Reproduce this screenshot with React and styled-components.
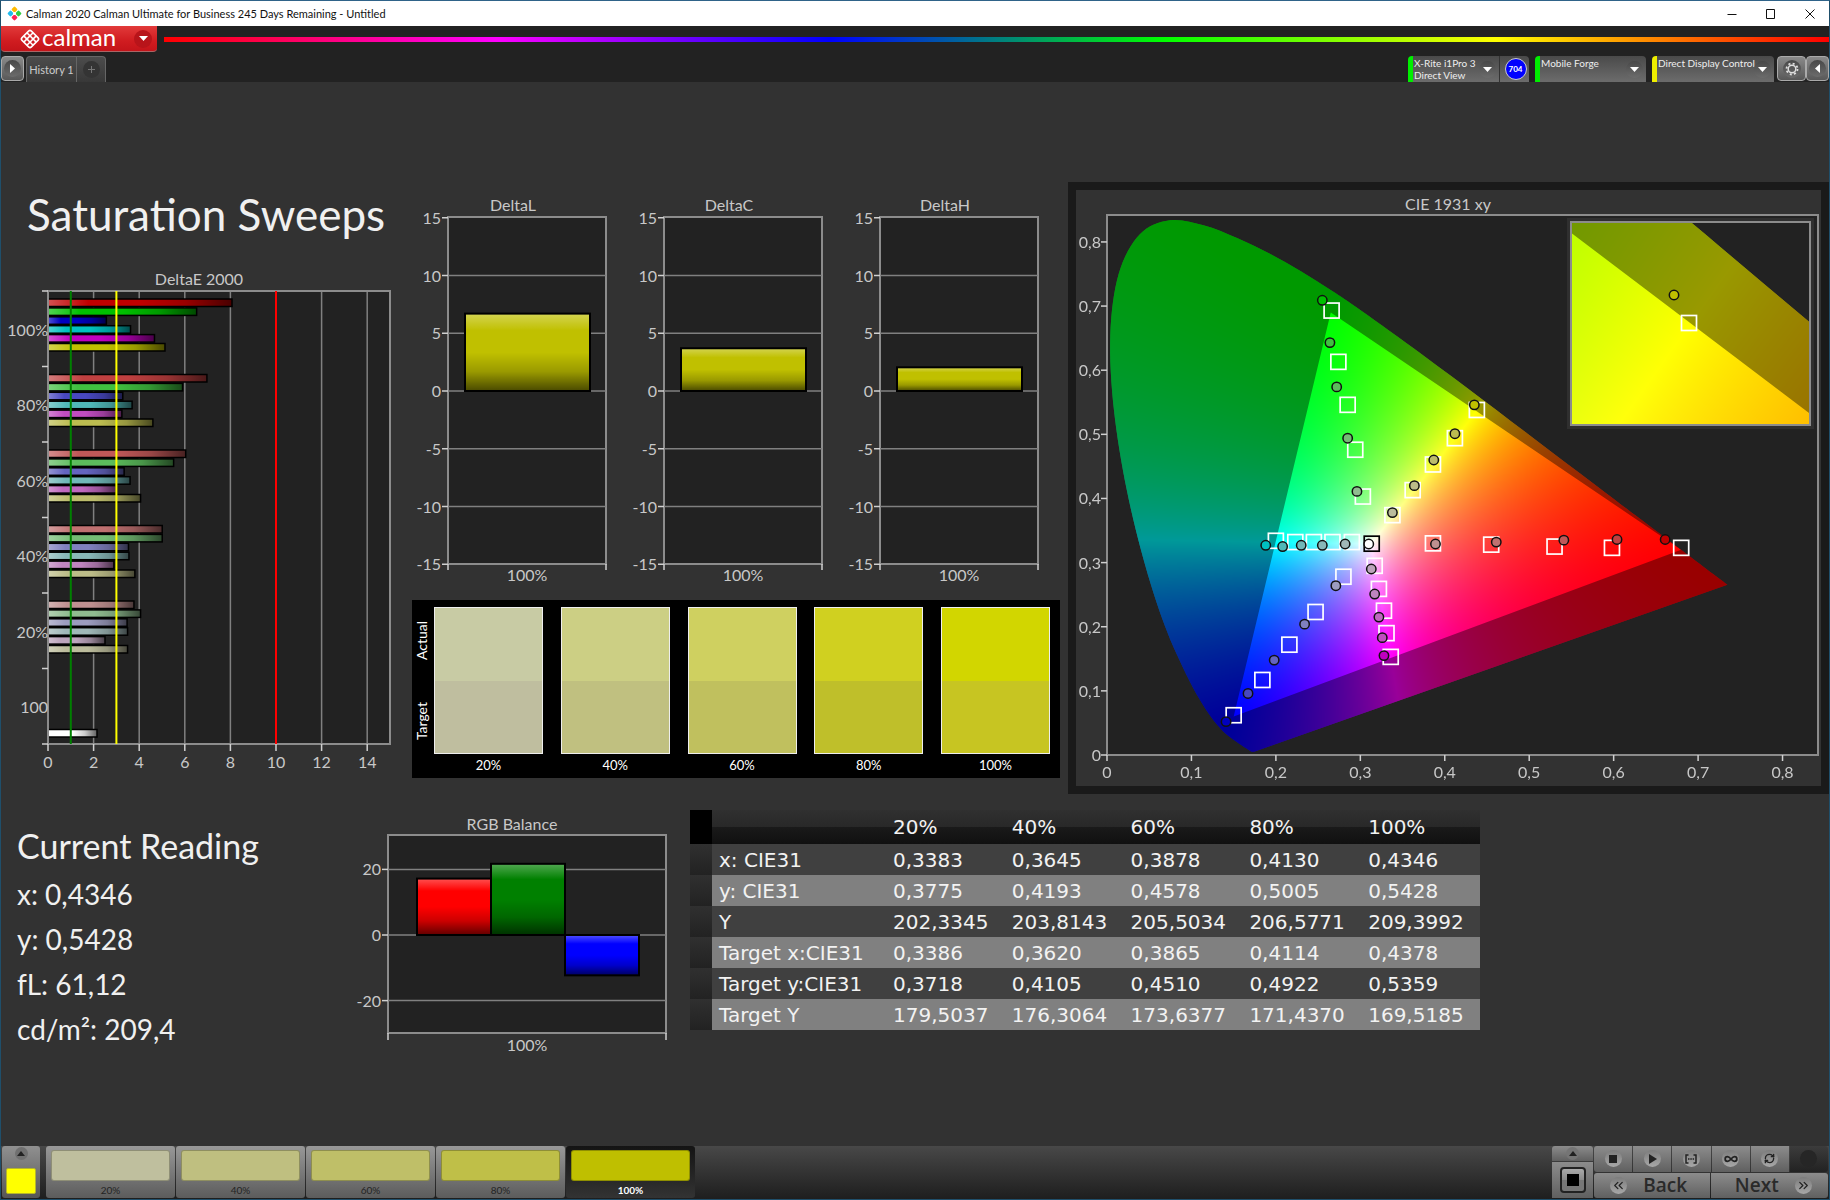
import React, { useEffect, useRef } from "react";
import styled, { createGlobalStyle } from "styled-components";
import { Infinity as InfinityIcon, RefreshCw, ChevronsLeft, ChevronsRight } from "lucide-react";

const GlobalStyle = createGlobalStyle`
  * { box-sizing: border-box; }
  body {
    margin: 0;
    background: #323232;
    font-family: Lato, "Liberation Sans", sans-serif;
  }
  button { font-family: inherit; padding: 0; border: 0; }
`;

const Window = styled.div`
  min-height: 100vh;
  display: flex;
  flex-direction: column;
  background: #323232;
  border: 1px solid #1f4f6b;
  border-top-color: #2f6389;
`;

/* title bar */
const Titlebar = styled.header`
  display: flex;
  align-items: center;
  height: 25px;
  padding-left: 6px;
  background: #fff;
  color: #111;
  font-size: 11px;
  line-height: 24px;
`;
const Wintitle = styled.span`
  flex: 1;
  padding-left: 4px;
`;
const Winbutton = styled.button`
  width: 39px;
  height: 25px;
  background: none;
  display: grid;
  place-items: center;
`;

/* ribbon with logo and rainbow line */
const Ribbon = styled.div`
  display: flex;
  align-items: center;
  gap: 7px;
  height: 26px;
  background: #222;
`;
const Logobutton = styled.button`
  display: flex;
  align-items: center;
  gap: 2px;
  width: 156px;
  height: 26px;
  padding-left: 19px;
  color: #fff;
  background: linear-gradient(#e23a3a, #d01c20 60%, #c4141a);
  border-radius: 0 0 4px 4px;
  border-bottom: 1px solid #a66;
`;
const Brand = styled.span`
  width: 90px;
  text-align: left;
  font-size: 24px;
  line-height: 22px;
  padding-bottom: 4px;
`;
const Rainbow = styled.div`
  flex: 1;
  height: 5px;
  background: linear-gradient(90deg, #f00, #f0f 20%, #00f 40%, #0f0 60%, #ff0 80%, #f00);
`;

/* tab row */
const Tabrow = styled.nav`
  display: flex;
  align-items: flex-end;
  height: 30px;
  background: #222;
`;
const Spacer = styled.div`
  flex: 1;
`;
const Knob = styled.span`
  width: ${(p) => p.$size || 17}px;
  height: ${(p) => p.$size || 17}px;
  border-radius: 50%;
  display: grid;
  place-items: center;
  flex: none;
  color: ${(p) => p.$color || "#fff"};
  background: ${(p) => p.$bg || "linear-gradient(#484848, #6c6c6c)"};
`;
const Sidebutton = styled.button`
  width: ${(p) => p.$w}px;
  height: 25px;
  margin-bottom: 1px;
  display: grid;
  place-items: center;
  overflow: hidden;
  border: 1px solid #aaa;
  border-radius: 4px;
  background: linear-gradient(#8a8a8a, #585858);
`;
const Tab = styled.button`
  height: 26px;
  width: 51px;
  margin-left: 2px;
  color: #ccc;
  font-size: 11px;
  line-height: 26px;
  background: linear-gradient(#4c4c4c, #383838);
  border: 1px solid #666;
  border-bottom: 0;
  border-radius: 4px 0 0 0;
`;
const Addtab = styled(Tab)`
  width: 29px;
  margin-left: 0;
  border-left: 0;
  border-radius: 0 4px 0 0;
  display: grid;
  place-items: center;
`;
const Device = styled.button`
  display: flex;
  align-items: center;
  width: ${(p) => p.$w}px;
  height: 26px;
  margin-right: ${(p) => p.$gap}px;
  padding-right: 3px;
  text-align: left;
  color: #eee;
  font-size: 10px;
  line-height: 12px;
  border-left: 5px solid ${(p) => p.$led};
  border-radius: 4px ${(p) => (p.$joined ? 0 : 4)}px 0 0;
  background: linear-gradient(#4a4a4a, #6c6c6c);
`;
const Devicename = styled.span`
  flex: 1;
  min-width: 0;
  height: 24px;
  padding-left: 1px;
  white-space: nowrap;
`;
const Badgecell = styled.div`
  width: 30px;
  height: 26px;
  margin-right: 6px;
  padding-left: 2px;
  display: grid;
  place-items: center;
  border-left: 1px solid #333;
  border-radius: 0 4px 0 0;
  background: linear-gradient(#4a4a4a, #6c6c6c);
`;
const Badge = styled.span`
  width: 22px;
  height: 22px;
  border: 1px solid #ccc;
  border-radius: 50%;
  background: #00f;
  color: #fff;
  font: bold 8px/20px Lato, sans-serif;
  text-align: center;
`;

/* work area */
const Main = styled.main`
  flex: 1;
  padding-top: 100px;
`;
const Toprow = styled.section`
  display: grid;
  grid-template-columns: 411px 656px 1fr;
  align-items: start;
`;
const Leftcol = styled.div`
  padding-top: 6px;
`;
const Pagetitle = styled.h1`
  margin: 0 0 26px 26px;
  color: #f0f0f0;
  font-weight: 400;
  font-size: 44px;
  line-height: 52px;
`;
const Midcol = styled.div`
  padding-top: 8px;
`;
const Deltas = styled.div`
  display: flex;
`;
const Chart = styled.svg`
  display: block;
  text {
    font-size: 16px;
    fill: #c8c8c8;
  }
`;
const Ciepanel = styled.div`
  border: 8px solid #1a1a1a;
`;
const Ciechart = styled(Chart)`
  width: 100%;
  height: auto;
`;
const Gamutcanvas = styled.canvas`
  display: block;
  width: 100%;
  height: 100%;
`;

const Swatchbox = styled.div`
  display: flex;
  width: 648px;
  height: 178px;
  margin-top: 8px;
  padding-top: 7px;
  background: #000;
  color: #fff;
  font-size: 14px;
`;
const Swatchaxis = styled.div`
  display: flex;
  flex-direction: column;
  justify-content: space-between;
  align-items: center;
  width: 22px;
  height: 147px;
  padding: 14px 4px 14px 0;
  span {
    writing-mode: vertical-rl;
    transform: rotate(180deg);
  }
`;
const Swatchlist = styled.div`
  flex: 1;
  display: flex;
  justify-content: space-between;
  padding-right: 10px;
`;
const Swatch = styled.div`
  width: 109px;
  text-align: center;
  font-size: 13px;
  line-height: 22px;
`;
const Swatchcolor = styled.div`
  height: 147px;
  border: 1px solid #eee;
  background: linear-gradient(${(p) => p.$actual} 50%, ${(p) => p.$target} 50%);
`;

const Bottomrow = styled.section`
  display: flex;
  align-items: flex-start;
`;
const Readings = styled.div`
  width: 350px;
  padding: 30px 0 0 16px;
  color: #f0f0f0;
  h2 {
    margin: 0 0 4px;
    font-weight: 400;
    font-size: 34px;
    line-height: 44px;
  }
  p {
    margin: 0;
    font-size: 28px;
    line-height: 45px;
  }
`;
const Balance = styled.div`
  width: 339px;
  padding-top: 18px;
`;
const Datatable = styled.table`
  width: 790px;
  margin-top: 16px;
  table-layout: fixed;
  border-collapse: collapse;
  color: #f2f2f2;
  font-family: "DejaVu Sans", sans-serif;
  font-size: 20px;
  th {
    font-weight: 400;
    text-align: left;
  }
  th, td {
    height: 31px;
    padding: 0 0 0 7px;
    line-height: 24px;
  }
  thead th {
    height: 34px;
    background: linear-gradient(#303030, #282828 50%, #1a1a1a 50%, #101010);
  }
  tbody tr:nth-child(odd) { background: #404040; }
  tbody tr:nth-child(even) { background: #808080; }
  tbody td:first-child { background: linear-gradient(#303030, #222); }
  thead tr > :first-child { background: #000; }
`;
const Stubcol = styled.col`
  width: 22px;
`;
const Labelcol = styled.col`
  width: 174px;
`;

/* bottom bar */
const Bottombar = styled.footer`
  display: flex;
  align-items: stretch;
  height: 53px;
  padding: 0 1px 1px;
  background: linear-gradient(#484848, #1e1e1e);
`;
const Currentcolor = styled.button`
  display: flex;
  flex-direction: column;
  align-items: center;
  justify-content: space-between;
  width: 38px;
  margin-right: 6px;
  padding: 1px 0 4px;
  border-radius: 3px;
  background: linear-gradient(#909090, #565656);
`;
const Yellowchip = styled.span`
  width: 30px;
  height: 26px;
  border-radius: 2px;
  background: #ff0;
  border: 1px solid #b5b52c;
`;
const Pattern = styled.button`
  width: 129px;
  margin-right: 1px;
  padding: 4px 5px 0;
  border-radius: 3px;
  color: ${(p) => (p.$on ? "#fff" : "#242424")};
  font-weight: ${(p) => (p.$on ? 700 : 400)};
  font-size: 10px;
  line-height: 18px;
  background: ${(p) => (p.$on ? "linear-gradient(#141414, #333)" : "linear-gradient(#989898, #5c5c5c)")};
`;
const Patterncolor = styled.span`
  display: block;
  height: 31px;
  border-radius: 3px;
  border: 1px solid rgba(0, 0, 0, 0.25);
  background: ${(p) => p.$color};
`;
const Levelcol = styled.div`
  display: flex;
  flex-direction: column;
  gap: 1px;
  width: 41px;
  margin-right: 1px;
`;
const Barbutton = styled.button`
  display: flex;
  align-items: center;
  justify-content: center;
  gap: 16px;
  flex: 1;
  color: #2a2a2a;
  background: ${(p) => (p.$off ? "linear-gradient(#3c3c3c, #222)" : "linear-gradient(#8c8c8c, #606060)")};
  font: 600 19px/24px "Open Sans", sans-serif;
`;
const Backbutton = styled(Barbutton)`
  padding-right: 6px;
`;
const Nextbutton = styled(Barbutton)`
  padding-left: 8px;
`;
const Levelup = styled(Barbutton)`
  flex: none;
  height: 15px;
  border-radius: 3px 3px 0 0;
`;
const Framed = styled.span`
  width: 26px;
  height: 26px;
  border: 2px solid #222;
  border-radius: 4px;
  display: grid;
  place-items: center;
  background: linear-gradient(#aaa, #8a8a8a 50%, #777 50%);
`;
const Transport = styled.div`
  width: 234px;
  display: flex;
  flex-direction: column;
  gap: 1px;
`;
const Transportrow = styled.div`
  flex: 1;
  display: flex;
  gap: 1px;
  border-radius: 3px;
  overflow: hidden;
`;

const knobLight = "linear-gradient(#7c7c7c, #a8a8a8)";

const palette = {
  100: ["#c00000", "#00c000", "#0000c0", "#00c0c0", "#c000c0", "#c0c000"],
  80: ["#c04040", "#40c040", "#4848c0", "#50b8b8", "#c04cc0", "#bcbc50"],
  60: ["#bf5858", "#5cbc5c", "#6464bf", "#70b8b8", "#bf68bf", "#bcbc6c"],
  40: ["#bf7070", "#74bc74", "#8080bf", "#88b8b8", "#bf84bf", "#bcbc88"],
  20: ["#bf9090", "#90bc90", "#9c9cbf", "#a0b8b8", "#bca4bc", "#bcbc9c"],
};

const deltaE = [
  { label: "100%", level: 100, values: [8.07, 6.52, 2.56, 3.62, 4.67, 5.13] },
  { label: "80%", level: 80, values: [6.97, 5.9, 3.28, 3.69, 3.24, 4.6] },
  { label: "60%", level: 60, values: [6.04, 5.51, 3.34, 3.6, 3.0, 4.06] },
  { label: "40%", level: 40, values: [5.01, 5.01, 3.53, 3.55, 2.89, 3.81] },
  { label: "20%", level: 20, values: [3.77, 4.06, 3.47, 3.49, 2.5, 3.49] },
];

const swatches = [
  { label: "20%", actual: "#c8cba4", target: "#bfbe9f" },
  { label: "40%", actual: "#cccf84", target: "#c0c080" },
  { label: "60%", actual: "#cfd060", target: "#c0c05e" },
  { label: "80%", actual: "#d0d020", target: "#bfbf2a" },
  { label: "100%", actual: "#d2d600", target: "#c7c522" },
];

const patterns = [
  ["20%", "#bfbf9e"],
  ["40%", "#bfbf80"],
  ["60%", "#bfbf68"],
  ["80%", "#bfbf48"],
  ["100%", "#bfbf00"],
];

const tableHead = ["20%", "40%", "60%", "80%", "100%"];
const tableRows = [
  ["x: CIE31", "0,3383", "0,3645", "0,3878", "0,4130", "0,4346"],
  ["y: CIE31", "0,3775", "0,4193", "0,4578", "0,5005", "0,5428"],
  ["Y", "202,3345", "203,8143", "205,5034", "206,5771", "209,3992"],
  ["Target x:CIE31", "0,3386", "0,3620", "0,3865", "0,4114", "0,4378"],
  ["Target y:CIE31", "0,3718", "0,4105", "0,4510", "0,4922", "0,5359"],
  ["Target Y", "179,5037", "176,3064", "173,6377", "171,4370", "169,5185"],
];

// spectral locus, CIE 1931 2 degree observer
const locus = [
  [0.1741, 0.005], [0.1714, 0.0051], [0.1689, 0.0069], [0.1644, 0.0109], [0.1566, 0.0177],
  [0.144, 0.0297], [0.1355, 0.0399], [0.1241, 0.0578], [0.1096, 0.0868], [0.0913, 0.1327],
  [0.0687, 0.2007], [0.0454, 0.295], [0.0235, 0.4127], [0.0082, 0.5384], [0.0039, 0.6548],
  [0.0139, 0.7502], [0.0389, 0.812], [0.0743, 0.8338], [0.1142, 0.8262], [0.1547, 0.8059],
  [0.1929, 0.7816], [0.2296, 0.7543], [0.2658, 0.7243], [0.3016, 0.6923], [0.3731, 0.6245],
  [0.4441, 0.5547], [0.5125, 0.4866], [0.5752, 0.4242], [0.627, 0.3725], [0.6658, 0.334],
  [0.6915, 0.3083], [0.719, 0.2809], [0.7347, 0.2653],
];
const gamut = [[0.68, 0.32], [0.265, 0.69], [0.15, 0.06]];

// rows: 100, 80, 60, 40, 20 percent; order red, green, blue, cyan, magenta, yellow
const levels = [100, 80, 60, 40, 20];
const targets = [
  [[0.68, 0.323], [0.598, 0.323], [0.53, 0.325], [0.455, 0.328], [0.386, 0.33]],
  [[0.266, 0.693], [0.274, 0.613], [0.285, 0.546], [0.294, 0.476], [0.303, 0.403]],
  [[0.15, 0.062], [0.184, 0.117], [0.216, 0.172], [0.247, 0.223], [0.28, 0.278]],
  [[0.2, 0.334], [0.223, 0.332], [0.245, 0.332], [0.267, 0.332], [0.29, 0.332]],
  [[0.336, 0.153], [0.331, 0.19], [0.328, 0.225], [0.322, 0.259], [0.317, 0.295]],
  [[0.438, 0.538], [0.412, 0.494], [0.386, 0.453], [0.362, 0.413], [0.338, 0.374]],
];
const measured = [
  [[0.661, 0.336], [0.604, 0.336], [0.541, 0.335], [0.461, 0.332], [0.389, 0.329]],
  [[0.255, 0.709], [0.264, 0.643], [0.272, 0.574], [0.285, 0.494], [0.296, 0.411]],
  [[0.141, 0.052], [0.167, 0.096], [0.198, 0.148], [0.234, 0.204], [0.271, 0.264]],
  [[0.188, 0.327], [0.208, 0.325], [0.23, 0.327], [0.255, 0.327], [0.282, 0.329]],
  [[0.328, 0.155], [0.326, 0.183], [0.322, 0.215], [0.317, 0.251], [0.313, 0.29]],
  [[0.435, 0.546], [0.412, 0.501], [0.387, 0.46], [0.364, 0.42], [0.338, 0.378]],
];

// no display gamma here, so the hues stay saturated close to white
function xyToRgb(x, y) {
  const X = x / y;
  const Z = (1 - x - y) / y;
  const lin = [
    2.4935 * X - 0.9314 - 0.4027 * Z,
    -0.8295 * X + 1.7627 + 0.0236 * Z,
    0.0358 * X - 0.0762 + 0.9569 * Z,
  ].map((v) => Math.max(0, v));
  const top = Math.max(...lin);
  return lin.map((v) => 255 * Math.pow(v / top, 1.15));
}

function drawGamut(canvas, x0, x1, y0, y1) {
  const w = canvas.width;
  const h = canvas.height;
  const px = (x) => ((x - x0) / (x1 - x0)) * w;
  const py = (y) => h - ((y - y0) / (y1 - y0)) * h;

  const fill = document.createElement("canvas");
  fill.width = w;
  fill.height = h;
  const fctx = fill.getContext("2d");
  const img = fctx.createImageData(w, h);
  for (let j = 0; j < h; j++) {
    const y = y0 + ((h - j - 0.5) / h) * (y1 - y0);
    for (let i = 0; i < w; i++) {
      const x = x0 + ((i + 0.5) / w) * (x1 - x0);
      const [r, g, b] = xyToRgb(x, y);
      const k = (j * w + i) * 4;
      img.data[k] = r;
      img.data[k + 1] = g;
      img.data[k + 2] = b;
      img.data[k + 3] = 255;
    }
  }
  fctx.putImageData(img, 0, 0);

  const shape = new Path2D();
  shape.moveTo(px(locus[0][0]), py(locus[0][1]));
  for (let i = 0; i < locus.length - 1; i++) {
    const a = locus[Math.max(0, i - 1)];
    const b = locus[i];
    const c = locus[i + 1];
    const d = locus[Math.min(locus.length - 1, i + 2)];
    shape.bezierCurveTo(
      px(b[0] + (c[0] - a[0]) / 6), py(b[1] + (c[1] - a[1]) / 6),
      px(c[0] - (d[0] - b[0]) / 6), py(c[1] - (d[1] - b[1]) / 6),
      px(c[0]), py(c[1])
    );
  }
  shape.closePath();

  const shade = new Path2D();
  shade.rect(0, 0, w, h);
  gamut.forEach(([x, y], i) => (i ? shade.lineTo(px(x), py(y)) : shade.moveTo(px(x), py(y))));
  shade.closePath();

  const ctx = canvas.getContext("2d");
  ctx.clearRect(0, 0, w, h);
  ctx.save();
  ctx.clip(shape);
  ctx.drawImage(fill, 0, 0);
  ctx.fillStyle = "rgba(0, 0, 0, 0.4)";
  ctx.fill(shade, "evenodd");
  ctx.restore();
}

function Gamut({ width, height, x0, x1, y0, y1 }) {
  const ref = useRef(null);
  useEffect(() => {
    drawGamut(ref.current, x0, x1, y0, y1);
  }, [x0, x1, y0, y1]);
  return <Gamutcanvas ref={ref} width={width} height={height} />;
}

const Down = () => (
  <svg width="9" height="5" viewBox="0 0 9 5">
    <path d="M0 0h9L4.5 5z" fill="currentColor" />
  </svg>
);
const Up = () => (
  <svg width="8" height="5" viewBox="0 0 8 5">
    <path d="M0 5h8L4 0z" fill="#222" />
  </svg>
);

// a glossy bar: flat colour with a light-to-dark sheen over it
function Bar({ x, y, w, h, color, id, flat }) {
  return (
    <g>
      <linearGradient id={id} x1="0" y1="0" x2={flat ? 1 : 0} y2={flat ? 0 : 1}>
        <stop offset="0" stopColor="#fff" stopOpacity="0.32" />
        <stop offset="0.22" stopColor="#fff" stopOpacity="0" />
        <stop offset="0.5" stopColor="#000" stopOpacity="0" />
        <stop offset="0.75" stopColor="#000" stopOpacity="0.2" />
        <stop offset="1" stopColor="#000" stopOpacity="0.62" />
      </linearGradient>
      <rect x={x} y={y} width={w} height={h} fill={color} />
      <rect x={x} y={y} width={w} height={h} fill={`url(#${id})`} stroke="#000" strokeWidth={flat ? 1.5 : 2} />
    </g>
  );
}

function DeltaEChart() {
  const left = 47;
  const top = 25;
  const unit = 22.8;
  const row = 75.5;
  const bottom = top + row * 6;
  const right = left + unit * 15;
  return (
    <Chart width="411" height="516" viewBox="0 0 411 516">
      <text x="198" y="19" textAnchor="middle">DeltaE 2000</text>
      <rect x={left} y={top} width={right - left} height={bottom - top} fill="#222" />
      {[2, 4, 6, 8, 10, 12, 14].map((v) => (
        <line key={v} x1={left + v * unit} x2={left + v * unit} y1={top} y2={bottom} stroke="#808080" strokeWidth="1.5" />
      ))}
      {deltaE.map((g, i) =>
        g.values.map((v, k) => (
          <Bar
            key={g.label + k}
            id={`de${i}${k}`}
            flat
            x={left}
            y={top + i * row + 8 + k * 8.9}
            w={v * unit}
            h={7.5}
            color={palette[g.level][k]}
          />
        ))
      )}
      <Bar id="dewhite" flat x={left} y={top + 5 * row + 61} w={2.15 * unit} h={7.5} color="#fff" />
      <rect x={left} y={top} width={right - left} height={bottom - top} fill="none" stroke="#8c8c8c" strokeWidth="2" />
      <line x1={left + unit} x2={left + unit} y1={top} y2={bottom} stroke="#008000" strokeWidth="2" />
      <line x1={left + 3 * unit} x2={left + 3 * unit} y1={top} y2={bottom} stroke="#ff0" strokeWidth="2" />
      <line x1={left + 10 * unit} x2={left + 10 * unit} y1={top} y2={bottom} stroke="#f00" strokeWidth="2" />
      {[0, 1, 2, 3, 4, 5, 6].map((i) => (
        <line key={i} x1={left - 6} x2={left} y1={top + i * row} y2={top + i * row} stroke="#d0d0d0" strokeWidth="1.5" />
      ))}
      {["100%", "80%", "60%", "40%", "20%", "100"].map((t, i) => (
        <text key={i} x={left} y={top + (i + 0.5) * row + 7} textAnchor="end">{t}</text>
      ))}
      {[0, 2, 4, 6, 8, 10, 12, 14].map((v) => (
        <g key={v}>
          <line x1={left + v * unit} x2={left + v * unit} y1={bottom} y2={bottom + 7} stroke="#d0d0d0" strokeWidth="1.5" />
          <text x={left + v * unit} y={bottom + 24} textAnchor="middle">{v}</text>
        </g>
      ))}
    </Chart>
  );
}

function DeltaChart({ title, value }) {
  const zero = 201;
  const unit = 11.55;
  return (
    <Chart width="216" height="402" viewBox="0 0 216 402">
      <text x="101" y="21" textAnchor="middle">{title}</text>
      <rect x="36" y="27" width="158" height="347" fill="#222" stroke="#8c8c8c" strokeWidth="2" />
      {[15, 10, 5, 0, -5, -10, -15].map((v) => (
        <g key={v}>
          {Math.abs(v) < 15 && (
            <line x1="36" x2="194" y1={zero - v * unit} y2={zero - v * unit} stroke="#808080" strokeWidth="1.5" />
          )}
          <line x1="30" x2="36" y1={zero - v * unit} y2={zero - v * unit} stroke="#d0d0d0" strokeWidth="1.5" />
          <text x="29" y={zero - v * unit + 6} textAnchor="end">{v}</text>
        </g>
      ))}
      <Bar id={title} x={53} y={zero - value * unit} w={125} h={value * unit} color="#c0c000" />
      <path d="M36 374v6M194 374v6" stroke="#d0d0d0" strokeWidth="1.5" />
      <text x="115" y="391" textAnchor="middle">100%</text>
    </Chart>
  );
}

function BalanceChart() {
  const zero = 123;
  const unit = 3.28;
  return (
    <Chart width="330" height="248" viewBox="0 0 330 248">
      <text x="161" y="18" textAnchor="middle">RGB Balance</text>
      <rect x="37" y="23" width="278" height="198" fill="#222" stroke="#8c8c8c" strokeWidth="2" />
      {[20, 0, -20].map((v) => (
        <g key={v}>
          <line x1="37" x2="315" y1={zero - v * unit} y2={zero - v * unit} stroke="#808080" strokeWidth="1.5" />
          <line x1="31" x2="37" y1={zero - v * unit} y2={zero - v * unit} stroke="#d0d0d0" strokeWidth="1.5" />
          <text x="30" y={zero - v * unit + 6} textAnchor="end">{v}</text>
        </g>
      ))}
      <Bar id="balr" x={66} y={zero - 17.2 * unit} w={74} h={17.2 * unit} color="#f00" />
      <Bar id="balg" x={140} y={zero - 21.7 * unit} w={74} h={21.7 * unit} color="#008000" />
      <Bar id="balb" x={214} y={zero} w={74} h={12.3 * unit} color="#00f" />
      <path d="M37 221v7M315 221v7" stroke="#d0d0d0" strokeWidth="1.5" />
      <text x="176" y="239" textAnchor="middle">100%</text>
    </Chart>
  );
}

const Target = ({ x, y, color = "#fff" }) => (
  <rect x={x - 7.5} y={y - 7.5} width="15" height="15" fill="none" stroke={color} strokeWidth="1.7" />
);
const Measured = ({ x, y, color }) => (
  <circle cx={x} cy={y} r="4.7" fill={color} stroke="#111" strokeWidth="1.5" />
);

function CieChart() {
  const left = 31;
  const top = 25;
  const w = 711;
  const h = 540;
  const max = 0.842;
  const px = (x) => left + (x / max) * w;
  const py = (y) => top + h - (y / max) * h;
  const ticks = [0, 1, 2, 3, 4, 5, 6, 7, 8];
  const label = (t) => (t ? `0,${t}` : "0");
  return (
    <Ciechart viewBox="0 0 745 596">
      <text x="372" y="20" textAnchor="middle">CIE 1931 xy</text>
      <rect x={left} y={top} width={w} height={h} fill="#222" />
      <foreignObject x={left} y={top} width={w} height={h}>
        <Gamut width={w} height={h} x0={0} x1={max} y0={0} y1={max} />
      </foreignObject>
      <rect x={left} y={top} width={w} height={h} fill="none" stroke="#8c8c8c" strokeWidth="2" />
      {ticks.map((t) => (
        <g key={t}>
          <line x1={px(t / 10)} x2={px(t / 10)} y1={top + h} y2={top + h + 6} stroke="#d0d0d0" strokeWidth="1.5" />
          <text x={px(t / 10)} y={top + h + 23} textAnchor="middle">{label(t)}</text>
          <line x1={left - 6} x2={left} y1={py(t / 10)} y2={py(t / 10)} stroke="#d0d0d0" strokeWidth="1.5" />
          <text x={left - 6} y={py(t / 10) + 6} textAnchor="end">{label(t)}</text>
        </g>
      ))}
      {targets.flat().map(([x, y], i) => (
        <Target key={i} x={px(x)} y={py(y)} />
      ))}
      <Target x={px(0.3135)} y={py(0.3295)} color="#000" />
      {measured.map((line, c) =>
        line.map(([x, y], i) => (
          <Measured key={`${c}${i}`} x={px(x)} y={py(y)} color={palette[levels[i]][c]} />
        ))
      )}
      <Measured x={px(0.31)} y={py(0.329)} color="#fff" />

      <rect x="491" y="28" width="247" height="211" fill="#2f2f2f" />
      <rect x="495" y="32" width="239" height="203" fill="#222" />
      <foreignObject x="495" y="32" width="239" height="203">
        <Gamut width={239} height={203} x0={0.4128} x1={0.4628} y0={0.5109} y1={0.5609} />
      </foreignObject>
      <rect x="495" y="32" width="239" height="203" fill="none" stroke="#8c8c8c" strokeWidth="2" />
      <Target x={613} y={133} />
      <Measured x={598} y={105} color="#c0c000" />
    </Ciechart>
  );
}

function Header() {
  return (
    <>
      <Titlebar>
        <svg width="15" height="15" viewBox="0 0 16 16">
          <g transform="rotate(45 8 8)">
            <rect x="2.5" y="2.5" width="5" height="5" rx="1.2" fill="#fb0" />
            <rect x="8.5" y="2.5" width="5" height="5" rx="1.2" fill="#3c4" />
            <rect x="2.5" y="8.5" width="5" height="5" rx="1.2" fill="#2be" />
            <rect x="8.5" y="8.5" width="5" height="5" rx="1.2" fill="#f25" />
            <circle cx="8" cy="8" r="1.6" fill="#fff" />
          </g>
        </svg>
        <Wintitle>Calman 2020 Calman Ultimate for Business 245 Days Remaining - Untitled</Wintitle>
        <Winbutton aria-label="Minimize">
          <svg width="10" height="10"><path d="M0.5 5.5h9" stroke="#111" /></svg>
        </Winbutton>
        <Winbutton aria-label="Maximize">
          <svg width="10" height="10"><path d="M0.5 0.5h8v9h-8z" fill="none" stroke="#111" /></svg>
        </Winbutton>
        <Winbutton aria-label="Close">
          <svg width="10" height="10"><path d="M0.5 0.5l9 9M9.5 0.5l-9 9" stroke="#111" /></svg>
        </Winbutton>
      </Titlebar>
      <Ribbon>
        <Logobutton aria-haspopup="menu">
          <svg width="20" height="20" viewBox="0 0 20 20">
            <g transform="rotate(45 10 10)" fill="none" stroke="#fff" strokeWidth="1.6">
              <rect x="3.4" y="3.4" width="13.2" height="13.2" rx="2" />
              <path d="M7.8 3.4v13.2M12.2 3.4v13.2M3.4 7.8h13.2M3.4 12.2h13.2" />
            </g>
          </svg>
          <Brand>calman</Brand>
          <Knob $bg="#b8141a" $size={18}><Down /></Knob>
        </Logobutton>
        <Rainbow />
      </Ribbon>
      <Tabrow>
        <Sidebutton $w={23} aria-label="Expand">
          <Knob><svg width="5" height="9"><path d="M0 0v9l5-4.5z" fill="#fff" /></svg></Knob>
        </Sidebutton>
        <Tab>History 1</Tab>
        <Addtab aria-label="Add tab">
          <Knob $bg="#343434">
            <svg width="7" height="7"><path d="M0 3.5h7M3.5 0v7" stroke="#777" /></svg>
          </Knob>
        </Addtab>
        <Spacer />
        <Device $led="#0e0" $w={91} $gap={0} $joined>
          <Devicename>X-Rite i1Pro 3<br />Direct View</Devicename>
          <Knob><Down /></Knob>
        </Device>
        <Badgecell><Badge>704</Badge></Badgecell>
        <Device $led="#0e0" $w={111} $gap={6}>
          <Devicename>Mobile Forge</Devicename>
          <Knob><Down /></Knob>
        </Device>
        <Device $led="#ee0" $w={122} $gap={3}>
          <Devicename>Direct Display Control</Devicename>
          <Knob><Down /></Knob>
        </Device>
        <Sidebutton $w={29} aria-label="Settings">
          <Knob $size={18}>
            <svg width="14" height="14" viewBox="0 0 14 14" fill="none" stroke="#ddd">
              <circle cx="7" cy="7" r="3.8" strokeWidth="1.5" />
              <circle cx="7" cy="7" r="5.5" strokeWidth="1.8" strokeDasharray="2 2.32" />
            </svg>
          </Knob>
        </Sidebutton>
        <Sidebutton $w={23} aria-label="Collapse">
          <Knob><svg width="5" height="9"><path d="M5 0v9L0 4.5z" fill="#fff" /></svg></Knob>
        </Sidebutton>
      </Tabrow>
    </>
  );
}

function Footer() {
  return (
    <Bottombar>
      <Currentcolor aria-label="Current colour">
        <Knob $size={13} $bg="#707070"><Up /></Knob>
        <Yellowchip />
      </Currentcolor>
      {patterns.map(([label, color]) => (
        <Pattern key={label} $on={label === "100%"}>
          <Patterncolor $color={color} />
          {label}
        </Pattern>
      ))}
      <Spacer />
      <Levelcol>
        <Levelup aria-label="More"><Knob $size={13} $bg="#757575"><Up /></Knob></Levelup>
        <Barbutton aria-label="Pattern window">
          <Framed><svg width="12" height="12"><rect width="12" height="12" /></svg></Framed>
        </Barbutton>
      </Levelcol>
      <Transport>
        <Transportrow>
          <Barbutton aria-label="Stop">
            <Knob $bg={knobLight} $color="#222"><svg width="8" height="8"><rect width="8" height="8" fill="#222" /></svg></Knob>
          </Barbutton>
          <Barbutton aria-label="Play">
            <Knob $bg={knobLight} $color="#222"><svg width="9" height="10"><path d="M1 0v10l8-5z" fill="#222" /></svg></Knob>
          </Barbutton>
          <Barbutton aria-label="Range">
            <Knob $bg={knobLight} $color="#222">
              <svg width="12" height="10" fill="none" stroke="#222" strokeWidth="1.5">
                <path d="M3.5 1H1v8h2.5M8.5 1H11v8H8.5M3 5h1.5M5.3 5h1.5M7.6 5h1.5" />
              </svg>
            </Knob>
          </Barbutton>
          <Barbutton aria-label="Loop">
            <Knob $bg={knobLight} $color="#222"><InfinityIcon size={14} strokeWidth={3} /></Knob>
          </Barbutton>
          <Barbutton aria-label="Refresh">
            <Knob $bg={knobLight} $color="#222"><RefreshCw size={11} strokeWidth={3} /></Knob>
          </Barbutton>
          <Barbutton $off aria-label="Empty">
            <Knob $bg="#262626" />
          </Barbutton>
        </Transportrow>
        <Transportrow>
          <Backbutton>
            <Knob $bg={knobLight} $color="#222"><ChevronsLeft size={15} /></Knob>
            Back
          </Backbutton>
          <Nextbutton>
            Next
            <Knob $bg={knobLight} $color="#222"><ChevronsRight size={15} /></Knob>
          </Nextbutton>
        </Transportrow>
      </Transport>
    </Bottombar>
  );
}

function App() {
  return (
    <Window>
      <GlobalStyle />
      <Header />
      <Main>
        <Toprow>
          <Leftcol>
            <Pagetitle>Saturation Sweeps</Pagetitle>
            <DeltaEChart />
          </Leftcol>
          <Midcol>
            <Deltas>
              <DeltaChart title="DeltaL" value={6.7} />
              <DeltaChart title="DeltaC" value={3.7} />
              <DeltaChart title="DeltaH" value={2.05} />
            </Deltas>
            <Swatchbox>
              <Swatchaxis>
                <span>Actual</span>
                <span>Target</span>
              </Swatchaxis>
              <Swatchlist>
                {swatches.map((s) => (
                  <Swatch key={s.label}>
                    <Swatchcolor $actual={s.actual} $target={s.target} />
                    {s.label}
                  </Swatch>
                ))}
              </Swatchlist>
            </Swatchbox>
          </Midcol>
          <Ciepanel>
            <CieChart />
          </Ciepanel>
        </Toprow>
        <Bottomrow>
          <Readings>
            <h2>Current Reading</h2>
            <p>x: 0,4346</p>
            <p>y: 0,5428</p>
            <p>fL: 61,12</p>
            <p>cd/m²: 209,4</p>
          </Readings>
          <Balance>
            <BalanceChart />
          </Balance>
          <Datatable>
            <colgroup>
              <Stubcol />
              <Labelcol />
              <col span="5" />
            </colgroup>
            <thead>
              <tr>
                <td />
                <th />
                {tableHead.map((t) => (
                  <th key={t} scope="col">{t}</th>
                ))}
              </tr>
            </thead>
            <tbody>
              {tableRows.map(([name, ...cells]) => (
                <tr key={name}>
                  <td />
                  <th scope="row">{name}</th>
                  {cells.map((c) => (
                    <td key={c}>{c}</td>
                  ))}
                </tr>
              ))}
            </tbody>
          </Datatable>
        </Bottomrow>
      </Main>
      <Footer />
    </Window>
  );
}

export default App;
